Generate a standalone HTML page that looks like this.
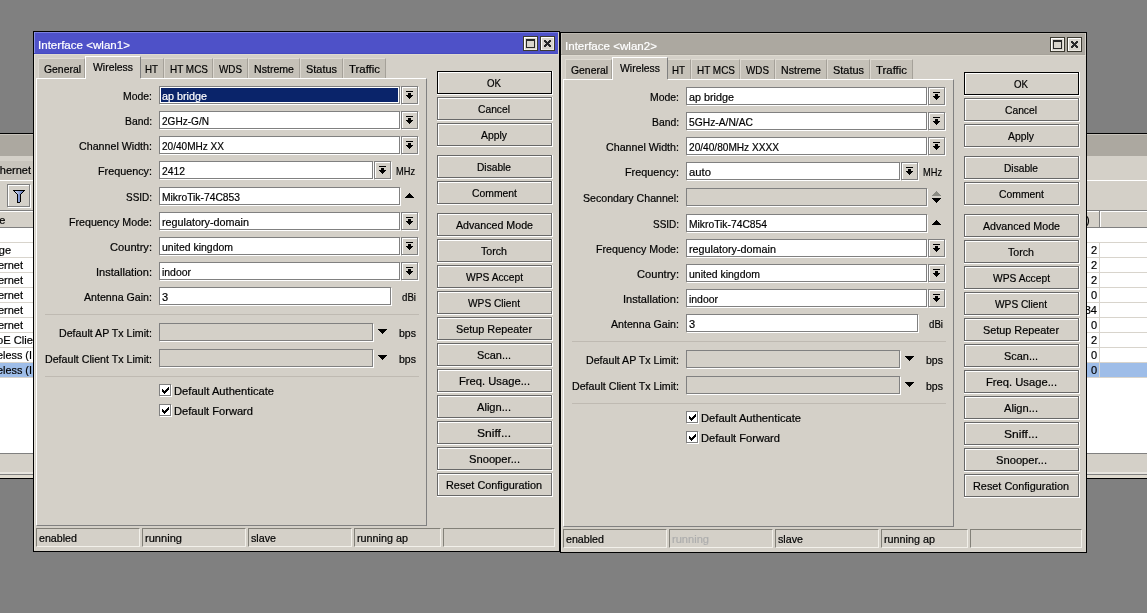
<!DOCTYPE html>
<html><head><meta charset="utf-8"><title>WinBox</title>
<style>
html,body{margin:0;padding:0}
body{width:1147px;height:613px;overflow:hidden;background:#808080;position:relative;font-family:"Liberation Sans",sans-serif;font-size:11px;line-height:12px}
div,span,svg{position:absolute;box-sizing:content-box}
.t{white-space:pre;line-height:12px;height:12px;-webkit-text-stroke:0.2px;transform-origin:0 0}
.w{width:527px;height:521px;background:#000;overflow:hidden}
.f{height:16px;border:1px solid #808080;background:#fff;box-shadow:1px 1px 0 #fff}
.f.d{background:#d4d0c8}
.db{width:15px;height:16px;border:1px solid #808080;background:#d4d0c8;box-shadow:inset 1px 1px 0 #fff,1px 1px 0 #fff}
.b{width:113px;height:21px;border:1px solid #686868;background:#d4d0c8;box-shadow:inset 1px 1px 0 #fff,1px 1px 0 #fff,0 1px 0 #fff,1px 0 0 #fff}
.b.k{border-color:#000}
.cb{width:10px;height:10px;border:1px solid #808080;background:#fff;box-shadow:1px 1px 0 #fff}
.tb{width:13px;height:13px;border:1px solid #3c3a30;background:#d8d4cc;box-shadow:inset 1px 1px 0 #fff,inset -1px -1px 0 #ece9e2}
.tab{height:19px;background:#c5c1b8;border-top:1px solid #e0dcd4;border-left:1px solid #dcd8d0;border-right:1px solid #a5a199}
.atab{background:#d4d0c8;border-top:1px solid #fff;border-left:1px solid #fff;border-right:1px solid #808080}
.pn{border:1px solid;border-color:#fff #808080 #808080 #fff}
.sc{height:17px;border:1px solid;border-color:#828078 #f2f0ea #f2f0ea #828078}
</style></head><body><div id="r" style="left:0;top:0;width:1147px;height:613px;will-change:transform">

<div style="left:0px;top:133px;width:33px;height:1px;background:#000;"></div>
<div style="left:0px;top:134px;width:33px;height:22px;background:#aca8a0;"></div>
<div style="left:0px;top:134px;width:33px;height:1px;background:#c6c2ba;"></div>
<div style="left:0px;top:156px;width:33px;height:322px;background:#d4d0c8;"></div>
<div style="left:0px;top:161px;width:33px;height:19px;background:#c8c4bc;"></div>
<div style="left:0px;top:180px;width:33px;height:1px;background:#fff;"></div>
<span class="t" style="left:-10.59px;top:164px;">Ethernet</span>
<div class="db" style="left:7px;top:184px;width:21px;height:21px"><svg width="12" height="13" viewBox="0 0 12 13" style="position:absolute;left:5px;top:5px" shape-rendering="crispEdges"><defs><linearGradient id="fg" x1="0" y1="0" x2="1" y2="0"><stop offset="0" stop-color="#d4dcf4"/><stop offset="1" stop-color="#5870b4"/></linearGradient><linearGradient id="fg2" x1="0" y1="0" x2="1" y2="0"><stop offset="0" stop-color="#a8b8e4"/><stop offset="1" stop-color="#6880c4"/></linearGradient></defs><rect x="0" y="0" width="12" height="1" fill="#000"/><rect x="1" y="1" width="10" height="1" fill="url(#fg)"/><rect x="1" y="1" width="1" height="1" fill="#000"/><rect x="10" y="1" width="1" height="1" fill="#000"/><rect x="2" y="2" width="8" height="1" fill="url(#fg)"/><rect x="2" y="2" width="1" height="1" fill="#000"/><rect x="9" y="2" width="1" height="1" fill="#000"/><rect x="3" y="3" width="6" height="1" fill="url(#fg)"/><rect x="3" y="3" width="1" height="1" fill="#000"/><rect x="8" y="3" width="1" height="1" fill="#000"/><rect x="4" y="4" width="4" height="1" fill="url(#fg)"/><rect x="4" y="4" width="1" height="1" fill="#000"/><rect x="7" y="4" width="1" height="1" fill="#000"/><rect x="4" y="5" width="4" height="7" fill="url(#fg2)"/><rect x="4" y="5" width="1" height="8" fill="#000"/><rect x="7" y="5" width="1" height="7" fill="#000"/><rect x="4" y="12" width="3" height="1" fill="#000"/></svg></div>
<div style="left:0px;top:210px;width:33px;height:1px;background:#808080;"></div>
<div style="left:0px;top:211px;width:33px;height:1px;background:#fff;"></div>
<div style="left:0px;top:227px;width:33px;height:1px;background:#808080;"></div>
<span class="t" style="left:-18.36px;top:214px;">Type</span>
<div style="left:0px;top:228px;width:33px;height:225px;background:#fff;"></div>
<div style="left:0px;top:242px;width:33px;height:1px;background:#d8d4cc;"></div>
<div style="left:0px;top:257px;width:33px;height:1px;background:#d8d4cc;"></div>
<div style="left:0px;top:272px;width:33px;height:1px;background:#d8d4cc;"></div>
<div style="left:0px;top:287px;width:33px;height:1px;background:#d8d4cc;"></div>
<div style="left:0px;top:302px;width:33px;height:1px;background:#d8d4cc;"></div>
<div style="left:0px;top:317px;width:33px;height:1px;background:#d8d4cc;"></div>
<div style="left:0px;top:332px;width:33px;height:1px;background:#d8d4cc;"></div>
<div style="left:0px;top:347px;width:33px;height:1px;background:#d8d4cc;"></div>
<div style="left:0px;top:362px;width:33px;height:1px;background:#d8d4cc;"></div>
<div style="left:0px;top:377px;width:33px;height:1px;background:#d8d4cc;"></div>
<div style="left:0px;top:363px;width:33px;height:14px;background:#9ebde8;"></div>
<span class="t" style="left:-19.58px;top:244px;">bridge</span>
<span class="t" style="left:-18.59px;top:259px;">Ethernet</span>
<span class="t" style="left:-18.59px;top:274px;">Ethernet</span>
<span class="t" style="left:-18.59px;top:289px;">Ethernet</span>
<span class="t" style="left:-18.59px;top:304px;">Ethernet</span>
<span class="t" style="left:-18.59px;top:319px;">Ethernet</span>
<span class="t" style="left:-3px;top:334px;transform:scaleX(1.0150);">oE Clie</span>
<span class="t" style="left:-3px;top:349px;transform:scaleX(0.9868);">eless (I</span>
<span class="t" style="left:-3px;top:364px;transform:scaleX(0.9868);">eless (I</span>
<div style="left:0px;top:453px;width:33px;height:1px;background:#808080;"></div>
<div style="left:0px;top:472px;width:33px;height:2px;background:#e8e5df;"></div>
<div style="left:0px;top:474px;width:33px;height:1px;background:#808080;"></div>
<div style="left:0px;top:475px;width:33px;height:3px;background:#e0dbd0;"></div>
<div style="left:0px;top:478px;width:33px;height:1px;background:#000;"></div>
<div style="left:0px;top:479px;width:33px;height:134px;background:#808080;"></div>
<div style="left:1087px;top:133px;width:60px;height:1px;background:#000;"></div>
<div style="left:1087px;top:134px;width:60px;height:22px;background:#aca8a0;"></div>
<div style="left:1087px;top:134px;width:60px;height:1px;background:#c6c2ba;"></div>
<div style="left:1087px;top:156px;width:60px;height:322px;background:#d4d0c8;"></div>
<div style="left:1087px;top:180px;width:60px;height:1px;background:#fff;"></div>
<div style="left:1087px;top:210px;width:60px;height:1px;background:#808080;"></div>
<div style="left:1087px;top:211px;width:60px;height:1px;background:#fff;"></div>
<div style="left:1087px;top:227px;width:60px;height:1px;background:#808080;"></div>
<div style="left:1099px;top:211px;width:1px;height:16px;background:#808080;"></div>
<div style="left:1100px;top:211px;width:1px;height:16px;background:#fff;"></div>
<span class="t" style="left:1086px;top:214px;">)</span>
<div style="left:1087px;top:228px;width:60px;height:225px;background:#fff;"></div>
<div style="left:1087px;top:242px;width:60px;height:1px;background:#d8d4cc;"></div>
<div style="left:1087px;top:257px;width:60px;height:1px;background:#d8d4cc;"></div>
<div style="left:1087px;top:272px;width:60px;height:1px;background:#d8d4cc;"></div>
<div style="left:1087px;top:287px;width:60px;height:1px;background:#d8d4cc;"></div>
<div style="left:1087px;top:302px;width:60px;height:1px;background:#d8d4cc;"></div>
<div style="left:1087px;top:317px;width:60px;height:1px;background:#d8d4cc;"></div>
<div style="left:1087px;top:332px;width:60px;height:1px;background:#d8d4cc;"></div>
<div style="left:1087px;top:347px;width:60px;height:1px;background:#d8d4cc;"></div>
<div style="left:1087px;top:362px;width:60px;height:1px;background:#d8d4cc;"></div>
<div style="left:1087px;top:377px;width:60px;height:1px;background:#d8d4cc;"></div>
<div style="left:1087px;top:363px;width:60px;height:14px;background:#9ebde8;"></div>
<div style="left:1099px;top:242px;width:1px;height:135px;background:#d8d4cc;"></div>
<span class="t" style="left:1090.88px;top:244px;">2</span>
<span class="t" style="left:1090.88px;top:259px;">2</span>
<span class="t" style="left:1090.88px;top:274px;">2</span>
<span class="t" style="left:1090.88px;top:289px;">0</span>
<span class="t" style="left:1084.75px;top:304px;">34</span>
<span class="t" style="left:1090.88px;top:319px;">0</span>
<span class="t" style="left:1090.88px;top:334px;">2</span>
<span class="t" style="left:1090.88px;top:349px;">0</span>
<span class="t" style="left:1090.88px;top:364px;">0</span>
<div style="left:1087px;top:453px;width:60px;height:1px;background:#808080;"></div>
<div style="left:1087px;top:472px;width:60px;height:2px;background:#e8e5df;"></div>
<div style="left:1087px;top:474px;width:60px;height:1px;background:#808080;"></div>
<div style="left:1087px;top:475px;width:60px;height:3px;background:#e0dbd0;"></div>
<div style="left:1087px;top:478px;width:60px;height:1px;background:#000;"></div>
<div style="left:1087px;top:479px;width:60px;height:134px;background:#808080;"></div>
<div class="w" style="left:33px;top:31px">
<div style="left:1px;top:1px;width:525px;height:519px;background:#d4d0c8;"></div>
<div style="left:1px;top:1px;width:524px;height:22px;background:#4e51c8;"></div>
<div style="left:1px;top:1px;width:524px;height:1px;background:#7b80e0;"></div>
<div style="left:1px;top:1px;width:1px;height:22px;background:#8890e4;"></div>
<div style="left:1px;top:22px;width:524px;height:1px;background:#454ac2;"></div>
<div style="left:1px;top:23px;width:525px;height:1px;background:#dedad0;"></div>
<div style="left:1px;top:23px;width:1px;height:496px;background:#e6e2da;"></div>
<span class="t" style="left:5px;top:8px;transform:scaleX(1.0520);color:#fff;">Interface &lt;wlan1&gt;</span>
<div class="tb" style="left:490px;top:5px">
<svg width="9" height="9" viewBox="0 0 9 9" style="position:absolute;left:2px;top:2px" shape-rendering="crispEdges"><path d="M0 0h9v9h-9zM1 2v6h7v-6z" fill="#282828" fill-rule="evenodd"/></svg>
</div>
<div class="tb" style="left:507px;top:5px">
<svg width="7" height="7" viewBox="0 0 7 7" style="position:absolute;left:3px;top:3px" shape-rendering="crispEdges"><path d="M0 0h2v1h-2zM5 0h2v1h-2zM0 1h3v1h-3zM4 1h3v1h-3zM1 2h5v1h-5zM2 3h3v1h-3zM1 4h5v1h-5zM0 5h3v1h-3zM4 5h3v1h-3zM0 6h2v1h-2zM5 6h2v1h-2z" fill="#282828"/></svg>
</div>
<div class="tab" style="left:5px;top:27px;width:45px"></div>
<span class="t" style="left:11px;top:32px;transform:scaleX(0.9453);">General</span>
<div class="tab" style="left:107px;top:27px;width:22px"></div>
<span class="t" style="left:112px;top:32px;transform:scaleX(0.8860);">HT</span>
<div class="tab" style="left:131px;top:27px;width:47px"></div>
<span class="t" style="left:137px;top:32px;transform:scaleX(0.9054);">HT MCS</span>
<div class="tab" style="left:180px;top:27px;width:33px"></div>
<span class="t" style="left:186px;top:32px;transform:scaleX(0.8959);">WDS</span>
<div class="tab" style="left:215px;top:27px;width:50px"></div>
<span class="t" style="left:221px;top:32px;transform:scaleX(0.9624);">Nstreme</span>
<div class="tab" style="left:267px;top:27px;width:41px"></div>
<span class="t" style="left:273px;top:32px;transform:scaleX(0.9940);">Status</span>
<div class="tab" style="left:310px;top:27px;width:41px"></div>
<span class="t" style="left:316px;top:32px;transform:scaleX(1.0350);">Traffic</span>
<div class="pn" style="left:3px;top:47px;width:389px;height:446px"></div>
<div class="atab" style="left:52px;top:25px;width:54px;height:21px"></div>
<div style="left:52px;top:47px;width:1px;height:1px;background:#fff;"></div>
<div style="left:53px;top:47px;width:55px;height:1px;background:#d4d0c8;"></div>
<span class="t" style="left:60px;top:30px;transform:scaleX(0.9485);">Wireless</span>
<span class="t" style="left:90.00px;top:59px;transform:scaleX(0.9484);">Mode:</span>
<div class="f" style="left:126px;top:55px;width:239px"></div>
<div style="left:128px;top:57px;width:237px;height:14px;background:#0a246a;"></div>
<span class="t" style="left:129px;top:59px;transform:scaleX(0.9809);color:#fff;">ap bridge</span>
<div class="db" style="left:368px;top:55px"><svg width="7" height="8" viewBox="0 0 7 8" style="position:absolute;left:4px;top:4px" shape-rendering="crispEdges"><path d="M0 0h7v1h-7zM2 2h3v2h-3zM0 4h7v1h-7zM1 5h5v1h-5zM2 6h3v1h-3zM3 7h1v1h-1z" fill="#000"/></svg></div>
<span class="t" style="left:92.00px;top:84px;transform:scaleX(0.9391);">Band:</span>
<div class="f" style="left:126px;top:80px;width:239px"></div>
<span class="t" style="left:129px;top:84px;transform:scaleX(0.9154);">2GHz-G/N</span>
<div class="db" style="left:368px;top:80px"><svg width="7" height="8" viewBox="0 0 7 8" style="position:absolute;left:4px;top:4px" shape-rendering="crispEdges"><path d="M0 0h7v1h-7zM2 2h3v2h-3zM0 4h7v1h-7zM1 5h5v1h-5zM2 6h3v1h-3zM3 7h1v1h-1z" fill="#000"/></svg></div>
<span class="t" style="left:46.00px;top:109px;transform:scaleX(0.9705);">Channel Width:</span>
<div class="f" style="left:126px;top:105px;width:239px"></div>
<span class="t" style="left:129px;top:109px;transform:scaleX(0.9134);">20/40MHz XX</span>
<div class="db" style="left:368px;top:105px"><svg width="7" height="8" viewBox="0 0 7 8" style="position:absolute;left:4px;top:4px" shape-rendering="crispEdges"><path d="M0 0h7v1h-7zM2 2h3v2h-3zM0 4h7v1h-7zM1 5h5v1h-5zM2 6h3v1h-3zM3 7h1v1h-1z" fill="#000"/></svg></div>
<span class="t" style="left:65.00px;top:134px;transform:scaleX(0.9813);">Frequency:</span>
<div class="f" style="left:126px;top:130px;width:212px"></div>
<span class="t" style="left:129px;top:134px;transform:scaleX(0.9394);">2412</span>
<div class="db" style="left:341px;top:130px"><svg width="7" height="8" viewBox="0 0 7 8" style="position:absolute;left:4px;top:4px" shape-rendering="crispEdges"><path d="M0 0h7v1h-7zM2 2h3v2h-3zM0 4h7v1h-7zM1 5h5v1h-5zM2 6h3v1h-3zM3 7h1v1h-1z" fill="#000"/></svg></div>
<span class="t" style="left:363px;top:134px;transform:scaleX(0.8404);">MHz</span>
<span class="t" style="left:93.00px;top:160px;transform:scaleX(0.9048);">SSID:</span>
<div class="f" style="left:126px;top:156px;width:239px"></div>
<span class="t" style="left:129px;top:160px;transform:scaleX(0.9359);">MikroTik-74C853</span>
<svg width="9" height="5" viewBox="0 0 9 5" style="position:absolute;left:372px;top:162px" shape-rendering="crispEdges"><path d="M4 0h1v1h-1zM3 1h3v1h-3zM2 2h5v1h-5zM1 3h7v1h-7zM0 4h9v1h-9z" fill="#000"/></svg>
<span class="t" style="left:36.00px;top:185px;transform:scaleX(0.9695);">Frequency Mode:</span>
<div class="f" style="left:126px;top:181px;width:239px"></div>
<span class="t" style="left:129px;top:185px;transform:scaleX(0.9813);">regulatory-domain</span>
<div class="db" style="left:368px;top:181px"><svg width="7" height="8" viewBox="0 0 7 8" style="position:absolute;left:4px;top:4px" shape-rendering="crispEdges"><path d="M0 0h7v1h-7zM2 2h3v2h-3zM0 4h7v1h-7zM1 5h5v1h-5zM2 6h3v1h-3zM3 7h1v1h-1z" fill="#000"/></svg></div>
<span class="t" style="left:77.00px;top:210px;transform:scaleX(1.0101);">Country:</span>
<div class="f" style="left:126px;top:206px;width:239px"></div>
<span class="t" style="left:129px;top:210px;transform:scaleX(0.9516);">united kingdom</span>
<div class="db" style="left:368px;top:206px"><svg width="7" height="8" viewBox="0 0 7 8" style="position:absolute;left:4px;top:4px" shape-rendering="crispEdges"><path d="M0 0h7v1h-7zM2 2h3v2h-3zM0 4h7v1h-7zM1 5h5v1h-5zM2 6h3v1h-3zM3 7h1v1h-1z" fill="#000"/></svg></div>
<span class="t" style="left:63.00px;top:235px;transform:scaleX(1.0062);">Installation:</span>
<div class="f" style="left:126px;top:231px;width:239px"></div>
<span class="t" style="left:129px;top:235px;transform:scaleX(0.9484);">indoor</span>
<div class="db" style="left:368px;top:231px"><svg width="7" height="8" viewBox="0 0 7 8" style="position:absolute;left:4px;top:4px" shape-rendering="crispEdges"><path d="M0 0h7v1h-7zM2 2h3v2h-3zM0 4h7v1h-7zM1 5h5v1h-5zM2 6h3v1h-3zM3 7h1v1h-1z" fill="#000"/></svg></div>
<span class="t" style="left:51.00px;top:260px;transform:scaleX(0.9667);">Antenna Gain:</span>
<div class="f" style="left:126px;top:256px;width:230px"></div>
<span class="t" style="left:129px;top:260px;">3</span>
<span class="t" style="left:369px;top:260px;transform:scaleX(0.8802);">dBi</span>
<div style="left:12px;top:283px;width:374px;height:1px;background:#bfbab2;"></div>
<span class="t" style="left:26.00px;top:296px;transform:scaleX(0.9667);">Default AP Tx Limit:</span>
<div class="f d" style="left:126px;top:292px;width:212px"></div>
<svg width="9" height="5" viewBox="0 0 9 5" style="position:absolute;left:345px;top:298px" shape-rendering="crispEdges"><path d="M0 0h9v1h-9zM1 1h7v1h-7zM2 2h5v1h-5zM3 3h3v1h-3zM4 4h1v1h-1z" fill="#000"/></svg>
<span class="t" style="left:366px;top:296px;transform:scaleX(0.9577);">bps</span>
<span class="t" style="left:12.00px;top:322px;transform:scaleX(0.9687);">Default Client Tx Limit:</span>
<div class="f d" style="left:126px;top:318px;width:212px"></div>
<svg width="9" height="5" viewBox="0 0 9 5" style="position:absolute;left:345px;top:324px" shape-rendering="crispEdges"><path d="M0 0h9v1h-9zM1 1h7v1h-7zM2 2h5v1h-5zM3 3h3v1h-3zM4 4h1v1h-1z" fill="#000"/></svg>
<span class="t" style="left:366px;top:322px;transform:scaleX(0.9577);">bps</span>
<div style="left:12px;top:345px;width:374px;height:1px;background:#bfbab2;"></div>
<div class="cb" style="left:126px;top:353px"><svg width="7" height="7" viewBox="0 0 7 7" style="position:absolute;left:2px;top:2px" shape-rendering="crispEdges"><path d="M0 2h1v3h-1zM1 3h1v3h-1zM2 4h1v3h-1zM3 3h1v3h-1zM4 2h1v3h-1zM5 1h1v3h-1zM6 0h1v3h-1z" fill="#000"/></svg></div>
<span class="t" style="left:141px;top:354px;transform:scaleX(1.0156);">Default Authenticate</span>
<div class="cb" style="left:126px;top:373px"><svg width="7" height="7" viewBox="0 0 7 7" style="position:absolute;left:2px;top:2px" shape-rendering="crispEdges"><path d="M0 2h1v3h-1zM1 3h1v3h-1zM2 4h1v3h-1zM3 3h1v3h-1zM4 2h1v3h-1zM5 1h1v3h-1zM6 0h1v3h-1z" fill="#000"/></svg></div>
<span class="t" style="left:141px;top:374px;transform:scaleX(1.0094);">Default Forward</span>
<div class="b k" style="left:404px;top:40px"></div>
<span class="t" style="left:454.00px;top:46px;transform:scaleX(0.8802);">OK</span>
<div class="b" style="left:404px;top:66px"></div>
<span class="t" style="left:445.00px;top:72px;transform:scaleX(0.9343);">Cancel</span>
<div class="b" style="left:404px;top:92px"></div>
<span class="t" style="left:448.00px;top:98px;transform:scaleX(0.9444);">Apply</span>
<div class="b" style="left:404px;top:124px"></div>
<span class="t" style="left:444.00px;top:130px;transform:scaleX(0.9267);">Disable</span>
<div class="b" style="left:404px;top:150px"></div>
<span class="t" style="left:438.50px;top:156px;transform:scaleX(0.9436);">Comment</span>
<div class="b" style="left:404px;top:182px"></div>
<span class="t" style="left:422.50px;top:188px;transform:scaleX(0.9686);">Advanced Mode</span>
<div class="b" style="left:404px;top:208px"></div>
<span class="t" style="left:448.00px;top:214px;transform:scaleX(0.9663);">Torch</span>
<div class="b" style="left:404px;top:234px"></div>
<span class="t" style="left:432.50px;top:240px;transform:scaleX(0.9323);">WPS Accept</span>
<div class="b" style="left:404px;top:260px"></div>
<span class="t" style="left:435.00px;top:266px;transform:scaleX(0.9244);">WPS Client</span>
<div class="b" style="left:404px;top:286px"></div>
<span class="t" style="left:423.00px;top:292px;transform:scaleX(0.9862);">Setup Repeater</span>
<div class="b" style="left:404px;top:312px"></div>
<span class="t" style="left:444.00px;top:318px;transform:scaleX(0.9927);">Scan...</span>
<div class="b" style="left:404px;top:338px"></div>
<span class="t" style="left:425.50px;top:344px;transform:scaleX(1.0186);">Freq. Usage...</span>
<div class="b" style="left:404px;top:364px"></div>
<span class="t" style="left:444.00px;top:370px;transform:scaleX(1.0107);">Align...</span>
<div class="b" style="left:404px;top:390px"></div>
<span class="t" style="left:444.00px;top:396px;transform:scaleX(1.0973);">Sniff...</span>
<div class="b" style="left:404px;top:416px"></div>
<span class="t" style="left:435.50px;top:422px;transform:scaleX(1.0168);">Snooper...</span>
<div class="b" style="left:404px;top:442px"></div>
<span class="t" style="left:413.00px;top:448px;transform:scaleX(0.9873);">Reset Configuration</span>
<div class="sc" style="left:3px;top:497px;width:102px"></div>
<span class="t" style="left:6px;top:501px;transform:scaleX(0.9705);">enabled</span>
<div class="sc" style="left:109px;top:497px;width:102px"></div>
<span class="t" style="left:112px;top:501px;transform:scaleX(1.0081);">running</span>
<div class="sc" style="left:215px;top:497px;width:102px"></div>
<span class="t" style="left:218px;top:501px;transform:scaleX(0.9732);">slave</span>
<div class="sc" style="left:321px;top:497px;width:85px"></div>
<span class="t" style="left:324px;top:501px;transform:scaleX(0.9808);">running ap</span>
<div class="sc" style="left:410px;top:497px;width:110px"></div>
</div>
<div class="w" style="left:560px;top:32px">
<div style="left:1px;top:1px;width:525px;height:519px;background:#d4d0c8;"></div>
<div style="left:1px;top:1px;width:524px;height:22px;background:#aca8a0;"></div>
<div style="left:1px;top:1px;width:524px;height:1px;background:#bcb8b0;"></div>
<div style="left:1px;top:1px;width:1px;height:22px;background:#c6c2ba;"></div>
<div style="left:1px;top:22px;width:524px;height:1px;background:#a6a29a;"></div>
<div style="left:1px;top:23px;width:525px;height:1px;background:#dedad0;"></div>
<div style="left:1px;top:23px;width:1px;height:496px;background:#e6e2da;"></div>
<span class="t" style="left:5px;top:8px;transform:scaleX(1.0520);color:#fff;">Interface &lt;wlan2&gt;</span>
<div class="tb" style="left:490px;top:5px">
<svg width="9" height="9" viewBox="0 0 9 9" style="position:absolute;left:2px;top:2px" shape-rendering="crispEdges"><path d="M0 0h9v9h-9zM1 2v6h7v-6z" fill="#282828" fill-rule="evenodd"/></svg>
</div>
<div class="tb" style="left:507px;top:5px">
<svg width="7" height="7" viewBox="0 0 7 7" style="position:absolute;left:3px;top:3px" shape-rendering="crispEdges"><path d="M0 0h2v1h-2zM5 0h2v1h-2zM0 1h3v1h-3zM4 1h3v1h-3zM1 2h5v1h-5zM2 3h3v1h-3zM1 4h5v1h-5zM0 5h3v1h-3zM4 5h3v1h-3zM0 6h2v1h-2zM5 6h2v1h-2z" fill="#282828"/></svg>
</div>
<div class="tab" style="left:5px;top:27px;width:45px"></div>
<span class="t" style="left:11px;top:32px;transform:scaleX(0.9453);">General</span>
<div class="tab" style="left:107px;top:27px;width:22px"></div>
<span class="t" style="left:112px;top:32px;transform:scaleX(0.8860);">HT</span>
<div class="tab" style="left:131px;top:27px;width:47px"></div>
<span class="t" style="left:137px;top:32px;transform:scaleX(0.9054);">HT MCS</span>
<div class="tab" style="left:180px;top:27px;width:33px"></div>
<span class="t" style="left:186px;top:32px;transform:scaleX(0.8959);">WDS</span>
<div class="tab" style="left:215px;top:27px;width:50px"></div>
<span class="t" style="left:221px;top:32px;transform:scaleX(0.9624);">Nstreme</span>
<div class="tab" style="left:267px;top:27px;width:41px"></div>
<span class="t" style="left:273px;top:32px;transform:scaleX(0.9940);">Status</span>
<div class="tab" style="left:310px;top:27px;width:41px"></div>
<span class="t" style="left:316px;top:32px;transform:scaleX(1.0350);">Traffic</span>
<div class="pn" style="left:3px;top:47px;width:389px;height:446px"></div>
<div class="atab" style="left:52px;top:25px;width:54px;height:21px"></div>
<div style="left:52px;top:47px;width:1px;height:1px;background:#fff;"></div>
<div style="left:53px;top:47px;width:55px;height:1px;background:#d4d0c8;"></div>
<span class="t" style="left:60px;top:30px;transform:scaleX(0.9485);">Wireless</span>
<span class="t" style="left:90.00px;top:59px;transform:scaleX(0.9484);">Mode:</span>
<div class="f" style="left:126px;top:55px;width:239px"></div>
<span class="t" style="left:129px;top:59px;transform:scaleX(0.9809);">ap bridge</span>
<div class="db" style="left:368px;top:55px"><svg width="7" height="8" viewBox="0 0 7 8" style="position:absolute;left:4px;top:4px" shape-rendering="crispEdges"><path d="M0 0h7v1h-7zM2 2h3v2h-3zM0 4h7v1h-7zM1 5h5v1h-5zM2 6h3v1h-3zM3 7h1v1h-1z" fill="#000"/></svg></div>
<span class="t" style="left:92.00px;top:84px;transform:scaleX(0.9391);">Band:</span>
<div class="f" style="left:126px;top:80px;width:239px"></div>
<span class="t" style="left:129px;top:84px;transform:scaleX(0.9347);">5GHz-A/N/AC</span>
<div class="db" style="left:368px;top:80px"><svg width="7" height="8" viewBox="0 0 7 8" style="position:absolute;left:4px;top:4px" shape-rendering="crispEdges"><path d="M0 0h7v1h-7zM2 2h3v2h-3zM0 4h7v1h-7zM1 5h5v1h-5zM2 6h3v1h-3zM3 7h1v1h-1z" fill="#000"/></svg></div>
<span class="t" style="left:46.00px;top:109px;transform:scaleX(0.9705);">Channel Width:</span>
<div class="f" style="left:126px;top:105px;width:239px"></div>
<span class="t" style="left:129px;top:109px;transform:scaleX(0.9198);">20/40/80MHz XXXX</span>
<div class="db" style="left:368px;top:105px"><svg width="7" height="8" viewBox="0 0 7 8" style="position:absolute;left:4px;top:4px" shape-rendering="crispEdges"><path d="M0 0h7v1h-7zM2 2h3v2h-3zM0 4h7v1h-7zM1 5h5v1h-5zM2 6h3v1h-3zM3 7h1v1h-1z" fill="#000"/></svg></div>
<span class="t" style="left:65.00px;top:134px;transform:scaleX(0.9813);">Frequency:</span>
<div class="f" style="left:126px;top:130px;width:212px"></div>
<span class="t" style="left:129px;top:134px;transform:scaleX(1.0270);">auto</span>
<div class="db" style="left:341px;top:130px"><svg width="7" height="8" viewBox="0 0 7 8" style="position:absolute;left:4px;top:4px" shape-rendering="crispEdges"><path d="M0 0h7v1h-7zM2 2h3v2h-3zM0 4h7v1h-7zM1 5h5v1h-5zM2 6h3v1h-3zM3 7h1v1h-1z" fill="#000"/></svg></div>
<span class="t" style="left:363px;top:134px;transform:scaleX(0.8404);">MHz</span>
<span class="t" style="left:23.00px;top:160px;transform:scaleX(0.9630);">Secondary Channel:</span>
<div class="f d" style="left:126px;top:156px;width:239px"></div>
<svg width="9" height="5" viewBox="0 0 9 5" style="position:absolute;left:372px;top:159px" shape-rendering="crispEdges"><path d="M4 0h1v1h-1zM3 1h3v1h-3zM2 2h5v1h-5zM1 3h7v1h-7zM0 4h9v1h-9z" fill="#8c8c84"/></svg>
<svg width="9" height="5" viewBox="0 0 9 5" style="position:absolute;left:372px;top:166px" shape-rendering="crispEdges"><path d="M0 0h9v1h-9zM1 1h7v1h-7zM2 2h5v1h-5zM3 3h3v1h-3zM4 4h1v1h-1z" fill="#000"/></svg>
<span class="t" style="left:93.00px;top:186px;transform:scaleX(0.9048);">SSID:</span>
<div class="f" style="left:126px;top:182px;width:239px"></div>
<span class="t" style="left:129px;top:186px;transform:scaleX(0.9359);">MikroTik-74C854</span>
<svg width="9" height="5" viewBox="0 0 9 5" style="position:absolute;left:372px;top:188px" shape-rendering="crispEdges"><path d="M4 0h1v1h-1zM3 1h3v1h-3zM2 2h5v1h-5zM1 3h7v1h-7zM0 4h9v1h-9z" fill="#000"/></svg>
<span class="t" style="left:36.00px;top:211px;transform:scaleX(0.9695);">Frequency Mode:</span>
<div class="f" style="left:126px;top:207px;width:239px"></div>
<span class="t" style="left:129px;top:211px;transform:scaleX(0.9813);">regulatory-domain</span>
<div class="db" style="left:368px;top:207px"><svg width="7" height="8" viewBox="0 0 7 8" style="position:absolute;left:4px;top:4px" shape-rendering="crispEdges"><path d="M0 0h7v1h-7zM2 2h3v2h-3zM0 4h7v1h-7zM1 5h5v1h-5zM2 6h3v1h-3zM3 7h1v1h-1z" fill="#000"/></svg></div>
<span class="t" style="left:77.00px;top:236px;transform:scaleX(1.0101);">Country:</span>
<div class="f" style="left:126px;top:232px;width:239px"></div>
<span class="t" style="left:129px;top:236px;transform:scaleX(0.9516);">united kingdom</span>
<div class="db" style="left:368px;top:232px"><svg width="7" height="8" viewBox="0 0 7 8" style="position:absolute;left:4px;top:4px" shape-rendering="crispEdges"><path d="M0 0h7v1h-7zM2 2h3v2h-3zM0 4h7v1h-7zM1 5h5v1h-5zM2 6h3v1h-3zM3 7h1v1h-1z" fill="#000"/></svg></div>
<span class="t" style="left:63.00px;top:261px;transform:scaleX(1.0062);">Installation:</span>
<div class="f" style="left:126px;top:257px;width:239px"></div>
<span class="t" style="left:129px;top:261px;transform:scaleX(0.9484);">indoor</span>
<div class="db" style="left:368px;top:257px"><svg width="7" height="8" viewBox="0 0 7 8" style="position:absolute;left:4px;top:4px" shape-rendering="crispEdges"><path d="M0 0h7v1h-7zM2 2h3v2h-3zM0 4h7v1h-7zM1 5h5v1h-5zM2 6h3v1h-3zM3 7h1v1h-1z" fill="#000"/></svg></div>
<span class="t" style="left:51.00px;top:286px;transform:scaleX(0.9667);">Antenna Gain:</span>
<div class="f" style="left:126px;top:282px;width:230px"></div>
<span class="t" style="left:129px;top:286px;">3</span>
<span class="t" style="left:369px;top:286px;transform:scaleX(0.8802);">dBi</span>
<div style="left:12px;top:309px;width:374px;height:1px;background:#bfbab2;"></div>
<span class="t" style="left:26.00px;top:322px;transform:scaleX(0.9667);">Default AP Tx Limit:</span>
<div class="f d" style="left:126px;top:318px;width:212px"></div>
<svg width="9" height="5" viewBox="0 0 9 5" style="position:absolute;left:345px;top:324px" shape-rendering="crispEdges"><path d="M0 0h9v1h-9zM1 1h7v1h-7zM2 2h5v1h-5zM3 3h3v1h-3zM4 4h1v1h-1z" fill="#000"/></svg>
<span class="t" style="left:366px;top:322px;transform:scaleX(0.9577);">bps</span>
<span class="t" style="left:12.00px;top:348px;transform:scaleX(0.9687);">Default Client Tx Limit:</span>
<div class="f d" style="left:126px;top:344px;width:212px"></div>
<svg width="9" height="5" viewBox="0 0 9 5" style="position:absolute;left:345px;top:350px" shape-rendering="crispEdges"><path d="M0 0h9v1h-9zM1 1h7v1h-7zM2 2h5v1h-5zM3 3h3v1h-3zM4 4h1v1h-1z" fill="#000"/></svg>
<span class="t" style="left:366px;top:348px;transform:scaleX(0.9577);">bps</span>
<div style="left:12px;top:371px;width:374px;height:1px;background:#bfbab2;"></div>
<div class="cb" style="left:126px;top:379px"><svg width="7" height="7" viewBox="0 0 7 7" style="position:absolute;left:2px;top:2px" shape-rendering="crispEdges"><path d="M0 2h1v3h-1zM1 3h1v3h-1zM2 4h1v3h-1zM3 3h1v3h-1zM4 2h1v3h-1zM5 1h1v3h-1zM6 0h1v3h-1z" fill="#000"/></svg></div>
<span class="t" style="left:141px;top:380px;transform:scaleX(1.0156);">Default Authenticate</span>
<div class="cb" style="left:126px;top:399px"><svg width="7" height="7" viewBox="0 0 7 7" style="position:absolute;left:2px;top:2px" shape-rendering="crispEdges"><path d="M0 2h1v3h-1zM1 3h1v3h-1zM2 4h1v3h-1zM3 3h1v3h-1zM4 2h1v3h-1zM5 1h1v3h-1zM6 0h1v3h-1z" fill="#000"/></svg></div>
<span class="t" style="left:141px;top:400px;transform:scaleX(1.0094);">Default Forward</span>
<div class="b k" style="left:404px;top:40px"></div>
<span class="t" style="left:454.00px;top:46px;transform:scaleX(0.8802);">OK</span>
<div class="b" style="left:404px;top:66px"></div>
<span class="t" style="left:445.00px;top:72px;transform:scaleX(0.9343);">Cancel</span>
<div class="b" style="left:404px;top:92px"></div>
<span class="t" style="left:448.00px;top:98px;transform:scaleX(0.9444);">Apply</span>
<div class="b" style="left:404px;top:124px"></div>
<span class="t" style="left:444.00px;top:130px;transform:scaleX(0.9267);">Disable</span>
<div class="b" style="left:404px;top:150px"></div>
<span class="t" style="left:438.50px;top:156px;transform:scaleX(0.9436);">Comment</span>
<div class="b" style="left:404px;top:182px"></div>
<span class="t" style="left:422.50px;top:188px;transform:scaleX(0.9686);">Advanced Mode</span>
<div class="b" style="left:404px;top:208px"></div>
<span class="t" style="left:448.00px;top:214px;transform:scaleX(0.9663);">Torch</span>
<div class="b" style="left:404px;top:234px"></div>
<span class="t" style="left:432.50px;top:240px;transform:scaleX(0.9323);">WPS Accept</span>
<div class="b" style="left:404px;top:260px"></div>
<span class="t" style="left:435.00px;top:266px;transform:scaleX(0.9244);">WPS Client</span>
<div class="b" style="left:404px;top:286px"></div>
<span class="t" style="left:423.00px;top:292px;transform:scaleX(0.9862);">Setup Repeater</span>
<div class="b" style="left:404px;top:312px"></div>
<span class="t" style="left:444.00px;top:318px;transform:scaleX(0.9927);">Scan...</span>
<div class="b" style="left:404px;top:338px"></div>
<span class="t" style="left:425.50px;top:344px;transform:scaleX(1.0186);">Freq. Usage...</span>
<div class="b" style="left:404px;top:364px"></div>
<span class="t" style="left:444.00px;top:370px;transform:scaleX(1.0107);">Align...</span>
<div class="b" style="left:404px;top:390px"></div>
<span class="t" style="left:444.00px;top:396px;transform:scaleX(1.0973);">Sniff...</span>
<div class="b" style="left:404px;top:416px"></div>
<span class="t" style="left:435.50px;top:422px;transform:scaleX(1.0168);">Snooper...</span>
<div class="b" style="left:404px;top:442px"></div>
<span class="t" style="left:413.00px;top:448px;transform:scaleX(0.9873);">Reset Configuration</span>
<div class="sc" style="left:3px;top:497px;width:102px"></div>
<span class="t" style="left:6px;top:501px;transform:scaleX(0.9705);">enabled</span>
<div class="sc" style="left:109px;top:497px;width:102px"></div>
<span class="t" style="left:112px;top:501px;transform:scaleX(1.0081);color:#adadad;">running</span>
<div class="sc" style="left:215px;top:497px;width:102px"></div>
<span class="t" style="left:218px;top:501px;transform:scaleX(0.9732);">slave</span>
<div class="sc" style="left:321px;top:497px;width:85px"></div>
<span class="t" style="left:324px;top:501px;transform:scaleX(0.9808);">running ap</span>
<div class="sc" style="left:410px;top:497px;width:110px"></div>
</div>
</div></body></html>
